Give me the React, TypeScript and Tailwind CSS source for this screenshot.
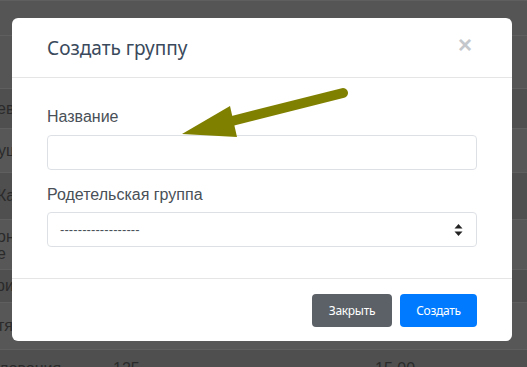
import React from "react";

const rows: { h: string; bg: string; text: React.ReactNode }[] = [
  { h: "h-[35px]", bg: "bg-[#555555]", text: null },
  { h: "h-[53px]", bg: "bg-[#555555]", text: null },
  { h: "h-[40px]", bg: "bg-[#4f4f4f]", text: <span className="-ml-[3px]">ева</span> },
  { h: "h-[44px]", bg: "bg-[#575757]", text: <span className="-ml-[2px]">ущ</span> },
  { h: "h-[47px]", bg: "bg-[#4f4f4f]", text: <span className="-ml-[3px]">Ка</span> },
  {
    h: "h-[50px]",
    bg: "bg-[#575757]",
    text: (
      <span className="-ml-[3px] flex flex-col leading-[17px]">
        <span>он</span>
        <span>е</span>
      </span>
    ),
  },
  { h: "h-[33px]", bg: "bg-[#4f4f4f]", text: <span className="-ml-[4px]">ри</span> },
  { h: "h-[47px]", bg: "bg-[#575757]", text: <span className="-ml-[3px]">тя</span> },
];

export default function App() {
  return (
    <div
      className="relative w-[527px] h-[367px] overflow-hidden bg-[#555555]"
      style={{ fontFamily: "'Liberation Sans', Arial, sans-serif" }}
    >
      {/* background table */}
      <div className="flex flex-col text-[16px] text-[#2a2a2a]">
        {rows.map((r, i) => (
          <div
            key={i}
            className={`${r.h} ${r.bg} border-t border-[#5f5f5f] flex items-center`}
          >
            {r.text}
          </div>
        ))}
        <div className="h-[30px] bg-[#4f4f4f] border-t border-[#5f5f5f] flex items-start pt-[7px]">
          <span className="-ml-[1px] w-[114px]">ловония</span>
          <span className="w-[262px]">125</span>
          <span>15.00</span>
        </div>
      </div>

      {/* modal */}
      <div className="absolute left-[12px] top-[18px] w-[500px] h-[323px] bg-white rounded-[6px] flex flex-col">
        <div className="h-[60px] flex items-center justify-between pl-[35px] pr-[40px] border-b border-[#e5e5e5]">
          <h5
            className="text-[19px] text-[#3a4a5c] leading-none pt-[1px]"
            style={{ fontFamily: "'Noto Sans', 'Open Sans', sans-serif" }}
          >
            Создать группу
          </h5>
          <span className="text-[24px] font-bold text-[#c4c8cc] leading-none -mt-[6px]">×</span>
        </div>
        <div className="flex-1 px-[35px] pt-[27px] flex flex-col">
          <label className="text-[16px] leading-[24px] text-[#495057]">Название</label>
          <div className="mt-[6px] h-[35px] border border-[#dde1e6] rounded-[4px]"></div>
          <label className="mt-[13px] text-[16px] leading-[24px] text-[#495057]">
            Родетельская группа
          </label>
          <div className="mt-[5px] h-[35px] border border-[#dde1e6] rounded-[4px] flex items-center justify-between pl-[12px] pr-[13px]">
            <span className="text-[13px] text-[#495057] tracking-[0.1px]">------------------</span>
            <svg width="9" height="14" viewBox="0 0 9 14">
              <path d="M4.5 1 L8.5 5.5 L0.5 5.5 Z" fill="#222" />
              <path d="M4.5 13 L8.5 8.5 L0.5 8.5 Z" fill="#222" />
            </svg>
          </div>
        </div>
        <div
          className="h-[63px] border-t border-[#e5e5e5] flex items-start justify-end gap-[8px] pt-[15px] pr-[35px]"
          style={{ fontFamily: "'Noto Sans', 'Open Sans', sans-serif" }}
        >
          <button className="w-[80px] h-[33px] rounded-[4px] bg-[#5b6167] text-white text-[12px] tracking-[-0.3px]">
            Закрыть
          </button>
          <button className="w-[77px] h-[33px] rounded-[4px] bg-[#007bff] text-white text-[12px] tracking-[-0.3px]">
            Создать
          </button>
        </div>
      </div>

      {/* arrow annotation */}
      <svg
        className="absolute left-0 top-0 pointer-events-none"
        width="527"
        height="367"
        viewBox="0 0 527 367"
      >
        <line x1="343" y1="93" x2="228" y2="122" stroke="#808000" strokeWidth="10" strokeLinecap="round" />
        <polygon points="182,134 230,106 237,137" fill="#808000" />
      </svg>
    </div>
  );
}
